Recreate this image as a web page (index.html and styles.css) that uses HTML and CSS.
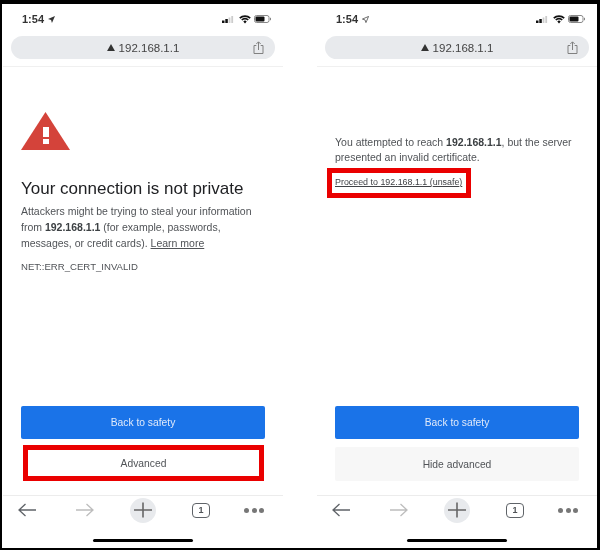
FILE: index.html
```html
<!DOCTYPE html>
<html lang="en">
<head>
  <meta charset="UTF-8">
  <title>Your connection is not private</title>
  <link rel="stylesheet" href="styles.css">
</head>
<body>

  <svg class="defs" width="0" height="0">
    <symbol id="signal" viewBox="0 0 14 7">
      <rect x="0" y="4.5" width="2.5" height="2.5" fill="#111"/>
      <rect x="3.3" y="3" width="2.5" height="4" fill="#111"/>
      <rect x="6.6" y="1.500" width="1.800" height="5.500" fill="#ccc"/>
      <rect x="9.300" y="0" width="1.800" height="7" fill="#ccc"/>
    </symbol>
    <symbol id="wifi" viewBox="0 0 12 9">
      <path d="M0.800 3.200a7.400 7.400 0 0 1 10.400 0M2.800 5a4.400 4.400 0 0 1 6.400 0" fill="none" stroke="#111" stroke-width="1.700"/>
      <path d="M4.300 6.400a2.300 2.300 0 0 1 3.400 0L6 8.600z" fill="#111"/>
    </symbol>
    <symbol id="battery" viewBox="0 0 18 8">
      <rect x="0.500" y="0.500" width="14.500" height="7" rx="2" fill="none" stroke="#888"/>
      <rect x="1.500" y="1.500" width="9" height="5" rx="1" fill="#111"/>
      <rect x="16" y="2.800" width="1" height="2.400" fill="#888"/>
    </symbol>
    <symbol id="share" viewBox="0 0 11 13">
      <path d="M3.300 4.500H1v8h9v-8H7.700M5.500 9V1M3.300 3L5.500 0.800 7.700 3" fill="none" stroke="#808080" stroke-width="1"/>
    </symbol>
    <symbol id="warn" viewBox="0 0 9 8">
      <path d="M4.500 0L9 8H0z" fill="#333"/>
    </symbol>
    <symbol id="back" viewBox="0 0 18 14">
      <path d="M18 7H1M7.500 1L1 7l6.500 6" fill="none" stroke="currentColor" stroke-width="1.300"/>
    </symbol>
    <symbol id="forward" viewBox="0 0 18 14">
      <path d="M0 7h17M10.500 1L17 7l-6.500 6" fill="none" stroke="currentColor" stroke-width="1.300"/>
    </symbol>
    <symbol id="plus" viewBox="0 0 18 16">
      <path d="M9 0.500v15M0 8h18" fill="none" stroke="#666" stroke-width="1.600"/>
    </symbol>
  </svg>

  <div class="shot">

    <div class="phone">
      <div class="status">
        <span class="time">1:54</span>
        <svg class="loc" viewBox="0 0 8 8"><path d="M8 0L0 3.500l3.500 1L4.500 8z" fill="#333"/></svg>
        <span class="status-icons">
          <svg class="ic-signal"><use href="#signal"/></svg>
          <svg class="ic-wifi"><use href="#wifi"/></svg>
          <svg class="ic-battery"><use href="#battery"/></svg>
        </span>
      </div>
      <div class="urlwrap">
        <div class="urlbar">
          <svg class="ic-warn"><use href="#warn"/></svg>
          <span class="url">192.168.1.1</span>
          <svg class="ic-share"><use href="#share"/></svg>
        </div>
      </div>
      <div class="page">
        <svg class="alert" viewBox="0 0 49 38">
          <path d="M24.500 0L49 38H0z" fill="#d4433a"/>
          <rect x="22" y="15" width="6" height="10" fill="#fff"/>
          <rect x="22" y="27" width="6" height="5" fill="#fff"/>
        </svg>
        <h1>Your connection is not private</h1>
        <p class="info">Attackers might be trying to steal your information from <b>192.168.1.1</b> (for example, passwords, messages, or credit cards). <u>Learn more</u></p>
        <p class="code">NET::ERR_CERT_INVALID</p>
        <div class="actions">
          <div class="btn btn-blue">Back to safety</div>
          <div class="btn btn-marked">Advanced</div>
        </div>
      </div>
      <div class="toolbar">
        <div class="tools">
          <svg class="tool dark"><use href="#back"/></svg>
          <svg class="tool light"><use href="#forward"/></svg>
          <span class="newtab"><svg class="ic-plus"><use href="#plus"/></svg></span>
          <span class="tabs">1</span>
          <span class="dots"><i></i><i></i><i></i></span>
        </div>
        <div class="home"></div>
      </div>
    </div>

    <div class="phone">
      <div class="status">
        <span class="time">1:54</span>
        <svg class="loc" viewBox="0 0 8 8"><path d="M7.500 0.500L0.500 3.500l3 1 1 3z" fill="none" stroke="#333" stroke-width="0.800"/></svg>
        <span class="status-icons">
          <svg class="ic-signal"><use href="#signal"/></svg>
          <svg class="ic-wifi"><use href="#wifi"/></svg>
          <svg class="ic-battery"><use href="#battery"/></svg>
        </span>
      </div>
      <div class="urlwrap">
        <div class="urlbar">
          <svg class="ic-warn"><use href="#warn"/></svg>
          <span class="url">192.168.1.1</span>
          <svg class="ic-share"><use href="#share"/></svg>
        </div>
      </div>
      <div class="page">
        <p class="info details">You attempted to reach <b>192.168.1.1</b>, but the server presented an invalid certificate.</p>
        <span class="proceed"><u>Proceed to 192.168.1.1 (unsafe)</u></span>
        <div class="actions">
          <div class="btn btn-blue">Back to safety</div>
          <div class="btn btn-grey">Hide advanced</div>
        </div>
      </div>
      <div class="toolbar">
        <div class="tools">
          <svg class="tool dark"><use href="#back"/></svg>
          <svg class="tool light"><use href="#forward"/></svg>
          <span class="newtab"><svg class="ic-plus"><use href="#plus"/></svg></span>
          <span class="tabs">1</span>
          <span class="dots"><i></i><i></i><i></i></span>
        </div>
        <div class="home"></div>
      </div>
    </div>

  </div>

</body>
</html>
```

FILE: styles.css
```css
html, body {
  margin: 0;
  height: 100%;
  background-color: #000;
  overflow: hidden;
}

body {
  font-family: "Liberation Sans", Arial, sans-serif;
  color: #505357;
}

.defs {
  display: block;
  height: 0;
}

/* the source picture is a soft, scaled down photo of two phones */
.shot {
  display: flex;
  gap: 34px;
  box-sizing: border-box;
  width: 595px;
  height: 544px;
  margin: 4px 0 0 2px;
  padding-left: 1px;
  background-color: #fff;
  filter: blur(0.35px);
}

.phone {
  display: flex;
  flex-direction: column;
  width: 280px;
  flex: none;
}

/* status bar */
.status {
  display: flex;
  align-items: center;
  height: 14px;
  margin: 8px 0 10px;
  padding: 0 11px 0 19px;
}

.time {
  font-size: 11px;
  font-weight: bold;
  color: #333;
}

.loc {
  width: 7px;
  height: 7px;
  margin-left: 4px;
}

.status-icons {
  display: flex;
  align-items: center;
  gap: 3px;
  margin-left: auto;
}

.ic-signal { width: 14px; height: 7px; }
.ic-wifi { width: 12px; height: 9px; }
.ic-battery { width: 18px; height: 8px; }

/* url bar */
.urlwrap {
  padding: 0 8px 7px;
  border-bottom: 1px solid #f0f0f0;
}

.urlbar {
  position: relative;
  display: flex;
  justify-content: center;
  align-items: center;
  gap: 4px;
  height: 23px;
  border-radius: 12px;
  background-color: #e8eaed;
}

.ic-warn { width: 8px; height: 7px; }

.url {
  font-size: 11.5px;
  color: #444;
}

.ic-share {
  position: absolute;
  right: 11px;
  top: 5px;
  width: 11px;
  height: 13px;
}

/* page content */
.page {
  flex: 1;
  display: flex;
  flex-direction: column;
  padding: 0 18px 14px;
}

.alert {
  width: 49px;
  height: 38px;
  margin-top: 45px;
  flex: none;
}

h1 {
  margin: 29px 0 0;
  font-size: 17px;
  line-height: 20px;
  font-weight: normal;
  color: #202124;
}

.info {
  margin: 4px 0 0;
  font-size: 10.5px;
  line-height: 16px;
}

.info b {
  color: #3c4043;
}

.details {
  margin-top: 68px;
  line-height: 15px;
}

.code {
  margin: 8px 0 0;
  font-size: 9.600px;
  line-height: 16px;
}

.proceed {
  align-self: flex-start;
  margin: 3px 0 0 -8px;
  padding: 3px 4px 4px 3px;
  border: 5px solid #ea0000;
  font-size: 8.900px;
  line-height: 13px;
  color: #404246;
}

.actions {
  margin-top: auto;
}

.btn {
  display: flex;
  justify-content: center;
  align-items: center;
  box-sizing: border-box;
  font-size: 10.300px;
  border-radius: 2px;
}

.btn-blue {
  height: 33px;
  background-color: #1a73e8;
  color: #dfe9fa;
}

.btn-marked {
  height: 36px;
  margin: 6px 1px 0 2px;
  border: 5px solid #ea0000;
  border-radius: 0;
}

.btn-grey {
  height: 34px;
  margin-top: 8px;
  background-color: #f7f7f7;
}

/* bottom toolbar */
.toolbar {
  border-top: 1px solid #ececec;
  height: 52px;
}

.tools {
  display: flex;
  align-items: center;
  gap: 32px;
  height: 26px;
  margin-top: 1px;
  padding-left: 11px;
}

.tool {
  width: 26px;
  height: 14px;
  flex: none;
}

.dark { color: #5f6368; }
.light { color: #bdbdbd; }

.newtab {
  display: flex;
  justify-content: center;
  align-items: center;
  width: 26px;
  height: 25px;
  flex: none;
  border-radius: 50%;
  background-color: #e8eaed;
}

.ic-plus { width: 18px; height: 16px; }

.tabs {
  display: flex;
  justify-content: center;
  align-items: center;
  box-sizing: border-box;
  width: 18px;
  height: 15px;
  margin: 0 4px;
  flex: none;
  border: 1.500px solid #5f6368;
  border-radius: 4px;
  font-size: 9px;
  font-weight: bold;
}

.dots {
  display: flex;
  gap: 2.500px;
  margin-left: -2px;
}

.dots i {
  width: 5px;
  height: 5px;
  border-radius: 50%;
  background-color: #777;
}

.home {
  width: 100px;
  height: 3px;
  margin: 16px auto 0;
  border-radius: 2px;
  background-color: #000;
}
```
